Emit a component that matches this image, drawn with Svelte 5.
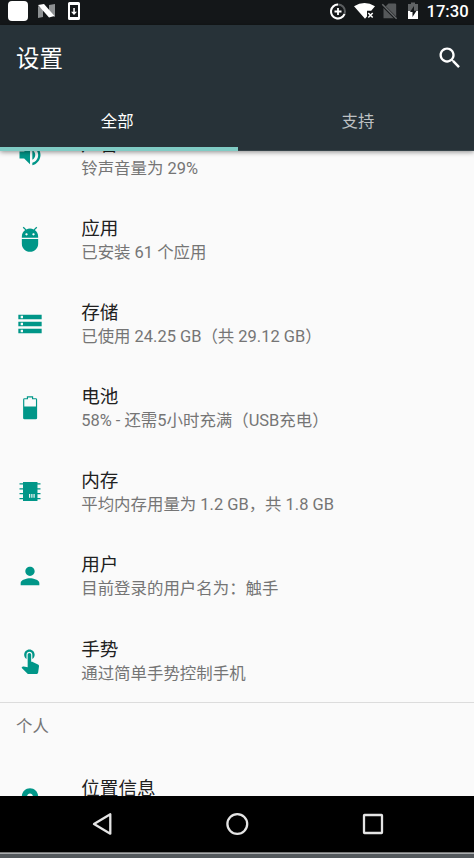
<script>
  const icons = {
    sound: 'M3 9v6h4l5 5V4L7 9H3zm13.5 3c0-1.77-1.02-3.29-2.5-4.03v8.05c1.48-.73 2.5-2.25 2.5-4.02zM14 3.23v2.06c2.89.86 5 3.54 5 6.71s-2.11 5.85-5 6.71v2.06c4.01-.91 7-4.49 7-8.77s-2.99-7.86-7-8.77z',
    apps: 'M5 16c0 3.87 3.13 7 7 7s7-3.13 7-7v-4H5v4zM16.12 4.37l2.1-2.1-.82-.83-2.3 2.31C14.16 3.28 13.12 3 12 3s-2.16.28-3.09.75L6.6 1.44l-.82.83 2.1 2.1C6.14 5.64 5 7.68 5 10v1h14v-1c0-2.32-1.14-4.37-2.88-5.63zM9 9c-.55 0-1-.45-1-1s.45-1 1-1 1 .45 1 1-.45 1-1 1zm6 0c-.55 0-1-.45-1-1s.45-1 1-1 1 .45 1 1-.45 1-1 1z',
    storage: 'M2 20h20v-4H2v4zm2-3h2v2H4v-2zM2 4v4h20V4H2zm4 3H4V5h2v2zm-4 7h20v-4H2v4zm2-3h2v2H4v-2z',
    battery: 'M9.300 1.900h5.400v1.700H16.900a1.200 1.200 0 0 1 1.200 1.200V20.500a1.200 1.200 0 0 1-1.200 1.200H7.300a1.200 1.200 0 0 1-1.200-1.200V4.800A1.200 1.200 0 0 1 7.300 3.600H9.300zM10.300 2.900V4.600H7.100V10.800H17.100V4.600H13.700V2.900z',
    memory: 'M6 3.400H18.400V4.500H21V5.600H18.400V8.700H21V9.800H18.400V12.900H21V14H18.400V17.200H21V18.300H18.400V19.700H6V18.300H3V17.200H6V14H3V12.900H6V9.800H3V8.700H6V5.600H3V4.500H6zM11.200 13.700V16.900H12.200V13.700zM13.100 13.700V16.900H14.100V13.700zM15 13.700V16.900H16V13.700z',
    user: 'M12 12c2.21 0 4-1.79 4-4s-1.790-4-4-4-4 1.790-4 4 1.790 4 4 4zm0 2c-2.670 0-8 1.340-8 4v2h16v-2c0-2.660-5.330-4-8-4z',
    gesture: 'M9 11.24V7.5C9 6.12 10.12 5 11.5 5S14 6.12 14 7.5v3.74c1.21-.81 2-2.18 2-3.74C16 5.01 13.99 3 11.5 3S7 5.01 7 7.5c0 1.56.79 2.93 2 3.74zm9.84 4.63l-4.54-2.26c-.17-.07-.35-.11-.54-.11H13v-6c0-.83-.67-1.5-1.5-1.5S10 6.67 10 7.5v10.74l-3.43-.72c-.08-.01-.15-.03-.24-.03-.31 0-.59.13-.79.33l-.79.8 4.94 4.94c.27.27.65.44 1.06.44h6.79c.75 0 1.33-.55 1.44-1.28l.75-5.27c.01-.07.02-.14.02-.2 0-.62-.38-1.16-.91-1.38z',
    place: 'M12 2C8.13 2 5 5.13 5 9c0 5.25 7 13 7 13s7-7.75 7-13c0-3.87-3.13-7-7-7zm0 9.5c-1.38 0-2.5-1.12-2.5-2.5s1.12-2.5 2.500-2.500 2.500 1.120 2.500 2.500-1.120 2.500-2.500 2.500z'
  };
  const device = [
    { icon: 'sound', title: '声音', summary: '铃声音量为 29%' },
    { icon: 'apps', title: '应用', summary: '已安装 61 个应用' },
    { icon: 'storage', title: '存储', summary: '已使用 24.25 GB（共 29.12 GB）' },
    { icon: 'battery', title: '电池', summary: '58% - 还需5小时充满（USB充电）' },
    { icon: 'memory', title: '内存', summary: '平均内存用量为 1.2 GB，共 1.8 GB' },
    { icon: 'user', title: '用户', summary: '目前登录的用户名为：触手' },
    { icon: 'gesture', title: '手势', summary: '通过简单手势控制手机' }
  ];
  const personal = [{ icon: 'place', title: '位置信息', summary: '' }];
</script>

{#snippet row(item)}
  <li class="row">
    <svg class="icon" viewBox="0 0 24 24"><path fill-rule="evenodd" d={icons[item.icon]} /></svg>
    <div class="text">
      <span class="title">{item.title}</span>
      <span class="summary">{item.summary}</span>
    </div>
  </li>
{/snippet}

<div class="phone">
  <div class="status">
    <svg class="notes" width="90" height="25" viewBox="0 0 90 25">
      <rect x="8" y="1" width="20" height="20" rx="4" fill="#fff" />
      <path d="M38 6l5 3v8l-5 1zM49 5l6-1v13l-6-3z" fill="#8d9092" />
      <path d="M38 5l6-1 10.500 12-5.500 1.500z" fill="#fff" />
      <path fill="#fff" fill-rule="evenodd" d="M69.500 2h9a1.500 1.500 0 0 1 1.500 1.500v15a1.500 1.500 0 0 1-1.500 1.500h-9a1.500 1.500 0 0 1-1.500-1.500v-15A1.500 1.500 0 0 1 69.500 2zM70 5v12h8V5z" />
      <path fill="#fff" d="M73.300 8h1.500v3.700H77l-3 3.300-3-3.300h2.300z" />
    </svg>
    <svg width="100" height="25" viewBox="325 0 100 25">
      <circle cx="338" cy="11.500" r="7" fill="none" stroke="#5b5e60" stroke-width="2" />
      <path d="M338 4.500a7 7 0 1 0 6.500 9.500" fill="none" stroke="#fff" stroke-width="2" />
      <path d="M338 8v7M334.500 11.500h7" stroke="#fff" stroke-width="1.800" />
      <path d="M354 6.200q10.500-6.600 21 0l-3.800 4.600h-4.200v5.700l-2 2.300z" fill="#fff" />
      <path d="M368.300 13l4.400 4.600M372.700 13l-4.400 4.600" stroke="#fff" stroke-width="1.500" />
      <path d="M388.500 3.500h6.500a1.200 1.200 0 0 1 1.200 1.200v13.500H383.500V8.500z" fill="#55585a" />
      <path d="M382.500 5l14 14" stroke="#141719" stroke-width="3" />
      <path d="M382.300 4.300l14.300 14.500" stroke="#66696b" stroke-width="1.500" />
      <path d="M408 4h3V2.500h4V4h3v7h-10z" fill="#606365" />
      <path d="M408 11h10v8h-10z" fill="#fff" />
      <path d="M414 6l-4 6h2.500v5l4-6.200H414z" fill="#141719" />
    </svg>
    <span class="clock">17:30</span>
  </div>

  <header>
    <div class="toolbar">
      <h1>设置</h1>
      <svg class="search" viewBox="0 0 24 24"><path d="M15.500 14h-.79l-.28-.27C15.410 12.590 16 11.110 16 9.500 16 5.910 13.090 3 9.500 3S3 5.910 3 9.500 5.910 16 9.500 16c1.610 0 3.090-.59 4.230-1.570l.27.28v.79l5 4.990L20.490 19l-4.990-5zm-6 0C7.010 14 5 11.990 5 9.500S7.010 5 9.500 5 14 7.010 14 9.500 11.990 14 9.500 14z" /></svg>
    </div>
    <nav class="tabs">
      <span class="tab active">全部</span>
      <span class="tab">支持</span>
    </nav>
  </header>

  <main>
    <ul class="first">{#each device as item}{@render row(item)}{/each}</ul>
    <h2>个人</h2>
    <ul>{#each personal as item}{@render row(item)}{/each}</ul>
  </main>

  <footer>
    <svg width="474" height="56" viewBox="0 796 474 56" fill="none" stroke="#e4e4e4" stroke-width="2.300" stroke-linejoin="round">
      <path d="M110.300 814.300v19.400L94 824z" />
      <circle cx="237.300" cy="824" r="9.900" />
      <rect x="364" y="815" width="18" height="18" rx=".5" />
    </svg>
  </footer>
  <div class="edge"></div>
</div>

<style>
  :global(body) { margin: 0; }
  .phone {
    width: 474px; height: 858px; overflow: hidden;
    display: flex; flex-direction: column;
    background: #fafafa;
    font-family: Roboto, "Noto Sans CJK SC", sans-serif;
  }
  .status {
    flex: none; height: 25px; background: #141719;
    display: flex; align-items: center;
  }
  .notes { margin-right: auto; }
  .clock {
    width: 49px; box-sizing: border-box; padding-left: 1.500px;
    font-size: 16.600px; line-height: 24px; height: 25px;
    font-weight: 500; color: #fff; white-space: nowrap;
  }
  header {
    flex: none; height: 126px; background: #273238; z-index: 1;
    box-shadow: 0 1px 5px rgba(0, 0, 0, .45);
    display: flex; flex-direction: column;
  }
  .toolbar {
    height: 66px; display: flex; align-items: center; justify-content: space-between;
    padding: 0 10.500px 0 16px;
  }
  h1 { margin: 0; padding-top: 2px; font-size: 23.400px; font-weight: 400; line-height: 34px; color: #fff; }
  .search { width: 28px; height: 28px; fill: #fff; padding-bottom: 1px; }
  .tabs { height: 60px; display: flex; }
  .tab {
    flex: 0 0 236px; text-align: center; box-sizing: border-box; padding-left: 4px;
    font-size: 16.400px; line-height: 61px; color: #bec1c3;
    border-bottom: 1px solid #37444a;
  }
  .tab.active {
    flex-basis: 238px; padding: 0 3.500px 0 0;
    color: #fff; border-bottom: 4px solid #80cbc4;
  }
  main { flex: none; height: 645px; overflow: hidden; }
  ul { margin: 0; padding: 0; list-style: none; }
  .first { margin-top: -37.800px; border-bottom: 1px solid #dcdcdc; }
  .row { height: 84.150px; display: flex; align-items: center; padding-left: 15.700px; }
  .icon { flex: none; width: 28px; height: 28px; fill: #009688; margin-right: 37.500px; }
  .text { display: flex; flex-direction: column; white-space: nowrap; padding-top: 3px; }
  .title { font-size: 18.600px; line-height: 24px; color: #212121; }
  .summary { font-size: 16.460px; line-height: 24px; height: 24px; color: #757575; }
  h2 {
    margin: 0; height: 54.500px; padding-left: 16px;
    font-size: 16.400px; font-weight: 400; line-height: 48px; color: #757575;
    box-sizing: border-box;
  }
  footer { flex: none; height: 56px; background: #000; display: flex; }
  .edge { flex: none; height: 4px; border-top: 1px solid #777; background: #53585c; box-shadow: inset 0 1px #a9acae; padding-bottom: 1px; }
</style>
